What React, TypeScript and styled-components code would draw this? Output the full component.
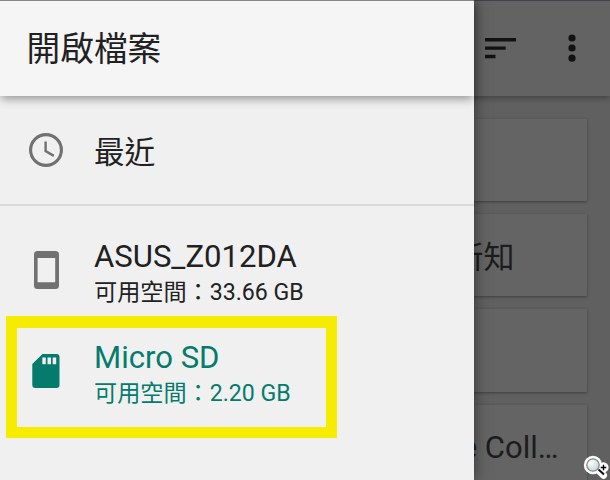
import React from "react";
import styled, { createGlobalStyle } from "styled-components";

const GlobalStyle = createGlobalStyle`
  * { box-sizing: border-box; }
  body {
    margin: 0;
    overflow: hidden;
    font-family: Roboto, "Noto Sans CJK TC", sans-serif;
    color: #212121;
  }
  svg { display: block; flex: none; }
`;

const Screen = styled.div`
  position: relative;
  width: 610px;
  height: 480px;
  overflow: hidden;
  background: #606060;
`;

const AppBar = styled.header`
  position: relative;
  display: flex;
  align-items: center;
  justify-content: flex-end;
  height: 96px;
  padding: 0 34px 1px 0;
  gap: 52px;
  background: #636363;
  border-top: 1px solid #3f4247;
  box-shadow: 0 2px 6px rgba(0, 0, 0, 0.32);
`;

const Cards = styled.main`
  display: flex;
  flex-direction: column;
  gap: 13px;
  padding: 23px 23.5px 0 24px;
`;

const Card = styled.article`
  display: flex;
  align-items: center;
  justify-content: flex-end;
  flex: none;
  height: 82.2px;
  background: #646464;
  border-radius: 1px;
  box-shadow: 0 1px 3px rgba(0, 0, 0, 0.36);
`;

const CardName = styled.span<{ $inset: number }>`
  margin-right: ${(p) => p.$inset}px;
  padding-top: 5px;
  font-size: 31px;
  line-height: 40px;
  color: #1c1c1c;
  white-space: nowrap;
`;

const Drawer = styled.aside`
  position: absolute;
  top: 0;
  left: 0;
  width: 474px;
  height: 480px;
  background: #f0f0f0;
  box-shadow: 0 0 14px rgba(0, 0, 0, 0.5);
`;

const DrawerHeader = styled.header`
  display: flex;
  align-items: center;
  height: 96px;
  padding: 3px 0 0 26.5px;
  background: #f5f5f5;
  border-top: 1px solid #86868b;
  box-shadow: 0 4px 9px -1px rgba(0, 0, 0, 0.38);
`;

const Title = styled.h1`
  margin: 0;
  font-size: 33.7px;
  line-height: 48px;
  font-weight: 400;
`;

const Item = styled.div<{ $height: number; $active?: boolean }>`
  display: grid;
  grid-template-columns: 36px 1fr;
  column-gap: 29.6px;
  align-items: center;
  height: ${(p) => p.$height}px;
  padding-left: 28.4px;
  color: ${(p) => (p.$active ? "#047b6c" : "#212121")};
`;

const ItemIcon = styled.span<{ $active?: boolean; $lift?: number }>`
  display: flex;
  justify-content: center;
  padding-bottom: ${(p) => p.$lift ?? 0}px;
  color: ${(p) => (p.$active ? "#047b6c" : "#717171")};
`;

const Labels = styled.div`
  padding-top: 5px;
`;

const Name = styled.div<{ $compact?: boolean }>`
  font-size: ${(p) => (p.$compact ? 30.6 : 31.1)}px;
  line-height: 36px;
  white-space: nowrap;
`;

const Space = styled.div`
  font-size: 23.15px;
  line-height: 35px;
  white-space: nowrap;
`;

const Divider = styled.hr`
  height: 2px;
  margin: 0;
  border: 0;
  background: #d9d9d9;
`;

const Roots = styled.section`
  padding-top: 15px;
`;

const Highlight = styled.div`
  position: absolute;
  left: 6px;
  top: 316px;
  width: 331px;
  height: 122px;
  border: 11px solid #f6ec00;
  border-top-width: 12px;
`;

const Magnifier = styled.svg`
  position: absolute;
  left: 582px;
  top: 454px;
`;

function SortIcon() {
  return (
    <svg width="31" height="22" viewBox="0 0 31 22" fill="#121212">
      <path d="M0 1h31v3.4H0zM0 9.4h20.7v3.4H0zM0 17.8h10.5v3.4H0z" />
    </svg>
  );
}

function MoreIcon() {
  return (
    <svg width="8" height="28" viewBox="0 0 8 28" fill="#121212">
      <circle cx="4" cy="4" r="3.6" />
      <circle cx="4" cy="14" r="3.6" />
      <circle cx="4" cy="24.2" r="3.6" />
    </svg>
  );
}

function ClockIcon() {
  return (
    <svg width="34" height="34" viewBox="0 0 34 34" fill="none" stroke="currentColor">
      <circle cx="17" cy="17" r="15.4" strokeWidth="3.1" />
      <path d="M16.6 8.4v9.7l8.2 4.8" strokeWidth="2.4" />
    </svg>
  );
}

function PhoneIcon() {
  return (
    <svg width="25" height="38" viewBox="0 0 25 38" fill="currentColor">
      <path
        fillRule="evenodd"
        d="M3.5 0h18Q25 0 25 3.5v31Q25 38 21.5 38h-18Q0 38 0 34.5v-31Q0 0 3.5 0zM3.6 7v24.3h17.6V7z"
      />
    </svg>
  );
}

function SdIcon() {
  return (
    <svg width="28" height="34" viewBox="0 0 28 34" fill="currentColor">
      <path
        fillRule="evenodd"
        d="M10.5 0H24.5Q27.5 0 27.5 3v28Q27.5 34 24.5 34H3.3Q.3 34 .3 31V10zM10.3 3.5v6.8h3.5V3.5zM15.5 3.5v6.8h3.5V3.5zM20.7 3.5v6.8h3.5V3.5z"
      />
    </svg>
  );
}

function MagnifierIcon() {
  return (
    <Magnifier width="28" height="26" viewBox="0 0 28 26">
      <defs>
        <radialGradient id="lens" cx="0.35" cy="0.3" r="0.8">
          <stop offset="0" stopColor="#ffffff" />
          <stop offset="1" stopColor="#b9d3d1" />
        </radialGradient>
      </defs>
      <path d="M15 15l6.5 6.3" stroke="#fff" strokeWidth="7" strokeLinecap="round" />
      <circle cx="21.4" cy="13.4" r="5.2" fill="#fff" />
      <circle cx="11" cy="11" r="9.2" fill="#fff" />
      <circle cx="11" cy="11" r="6.2" fill="url(#lens)" stroke="#888" strokeWidth="1.3" />
      <path d="M16.5 15.5l5.5 5" stroke="#111" strokeWidth="2" />
      <path d="M18.7 13.5h5.6M21.5 10.7v5.6" stroke="#000" strokeWidth="1.4" />
    </Magnifier>
  );
}

export default function App() {
  return (
    <>
      <GlobalStyle />
      <Screen>
        <AppBar>
          <SortIcon />
          <MoreIcon />
        </AppBar>
        <Cards>
          <Card />
          <Card>
            <CardName $inset={72}>新知</CardName>
          </Card>
          <Card />
          <Card>
            <CardName $inset={28}>e Coll…</CardName>
          </Card>
        </Cards>
        <Drawer>
          <DrawerHeader>
            <Title>開啟檔案</Title>
          </DrawerHeader>
          <Item $height={108}>
            <ItemIcon>
              <ClockIcon />
            </ItemIcon>
            <Labels>
              <Name $compact>最近</Name>
            </Labels>
          </Item>
          <Divider />
          <Roots>
            <Item $height={101}>
              <ItemIcon $lift={3}>
                <PhoneIcon />
              </ItemIcon>
              <Labels>
                <Name>ASUS_Z012DA</Name>
                <Space>可用空間：33.66 GB</Space>
              </Labels>
            </Item>
            <Item $height={101} $active>
              <ItemIcon $active $lift={4}>
                <SdIcon />
              </ItemIcon>
              <Labels>
                <Name>Micro SD</Name>
                <Space>可用空間：2.20 GB</Space>
              </Labels>
            </Item>
          </Roots>
        </Drawer>
        <Highlight />
        <MagnifierIcon />
      </Screen>
    </>
  );
}
